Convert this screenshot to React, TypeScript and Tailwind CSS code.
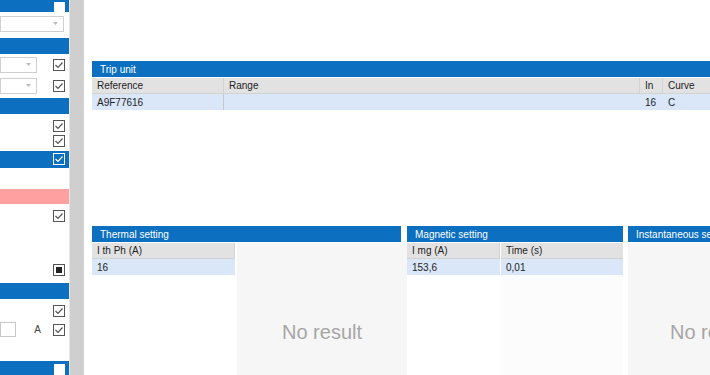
import React from 'react';

const Check = ({ checked = true, filled = false, dark = false }: { checked?: boolean; filled?: boolean; dark?: boolean }) => (
  <div className={`w-[12px] h-[12px] border flex items-center justify-center ${dark ? 'border-white bg-[#0c6fc0]' : 'border-[#555] bg-white'}`}>
    {filled && <div className="w-[6px] h-[6px] bg-[#222]" />}
    {checked && !filled && (
      <svg width="10" height="10" viewBox="0 0 10 10">
        <polyline points="1.5,5 4,7.5 8.5,2.5" fill="none" stroke={dark ? '#fff' : '#555'} strokeWidth="1.2" />
      </svg>
    )}
  </div>
);

const Dropdown = ({ w }: { w: string }) => (
  <div className={`${w} h-[16px] border border-[#d0d0d0] bg-white flex items-center justify-end pr-[5px]`}>
    <svg width="5" height="3" viewBox="0 0 5 3"><polygon points="0,0 5,0 2.5,3" fill="#bbb" /></svg>
  </div>
);

const Bar = ({ h = 'h-[16px]', children }: { h?: string; children?: React.ReactNode }) => (
  <div className={`${h} bg-[#0c6fc0] flex items-center justify-end pr-[4px]`}>{children}</div>
);

const Row = ({ children, h = 'h-[12px]' }: { children?: React.ReactNode; h?: string }) => (
  <div className={`${h} flex items-center justify-between pr-[4px]`}>{children}</div>
);

const Sidebar = () => (
  <div className="w-[70px] shrink-0 bg-white border-r border-[#e6e6e6] flex flex-col">
    <div className="h-[12px] bg-[#0c6fc0] flex items-end justify-end pr-[4px]">
      <div className="w-[11px] h-[10px] bg-white" />
    </div>
    <div className="h-[16px] mt-[4px] pr-[5px]"><Dropdown w="w-full" /></div>
    <div className="mt-[6px]"><Bar /></div>
    <div className="mt-[3px] h-[16px] flex items-center justify-between pr-[4px]"><Dropdown w="w-[37px]" /><Check /></div>
    <div className="mt-[5px] h-[16px] flex items-center justify-between pr-[4px]"><Dropdown w="w-[37px]" /><Check /></div>
    <div className="mt-[4px]"><Bar /></div>
    <div className="mt-[6px]"><Row><span /><Check /></Row></div>
    <div className="mt-[3px]"><Row><span /><Check /></Row></div>
    <div className="mt-[4px]"><Bar h="h-[17px]"><Check dark /></Bar></div>
    <div className="mt-[21px] h-[16px] bg-[#ffa0a0]" />
    <div className="mt-[6px]"><Row><span /><Check /></Row></div>
    <div className="mt-[42px]"><Row><span /><Check checked={false} filled /></Row></div>
    <div className="mt-[7px]"><Bar /></div>
    <div className="mt-[6px]"><Row><span /><Check /></Row></div>
    <div className="mt-[5px] h-[15px] flex items-center justify-between pr-[4px]">
      <div className="w-[16px] h-[15px] border border-[#c8c8c8] bg-white" />
      <span className="text-[10px] text-[#444] ml-auto mr-[12px]">A</span>
      <Check />
    </div>
    <div className="mt-[24px] h-[14px] bg-[#0c6fc0] flex items-start justify-end pr-[4px] pt-[3px]">
      <div className="w-[11px] h-[11px] bg-white" />
    </div>
  </div>
);

const Header = ({ title, w }: { title: string; w: string }) => (
  <div className={`${w} h-[16px] bg-[#0c6fc0] text-white pl-[8px] flex items-center whitespace-nowrap overflow-hidden`}>{title}</div>
);

const Cell = ({ w, children, head = false, last = false }: { w: string; children?: React.ReactNode; head?: boolean; last?: boolean }) => (
  <div className={`${w} shrink-0 h-[16px] pl-[5px] flex items-center whitespace-nowrap ${head ? 'bg-[#e2e2e2] border-b border-[#d2d2d2]' : 'bg-[#dae7f9]'} ${last ? '' : 'border-r border-[#c9c9c9]'}`}>
    {children}
  </div>
);

const NoResult = ({ className }: { className: string }) => (
  <div className={`${className} bg-[#f6f6f6] text-[#a6a6a6] text-[20px] leading-[24px] pt-[77px] whitespace-nowrap`}>No result</div>
);

export default function App() {
  return (
    <div className="w-[710px] h-[375px] overflow-hidden flex bg-white text-[10px] text-[#222]" style={{ fontFamily: '"Liberation Sans", Arial, sans-serif' }}>
      <Sidebar />
      <div className="w-[14px] shrink-0 bg-[#cfcfcf]" />
      <div className="flex-1 pl-[8px] overflow-hidden">
        <div className="mt-[61px] w-[640px]">
          <Header title="Trip unit" w="w-full" />
          <div className="flex mt-[1px]">
            <Cell w="w-[132px]" head>Reference</Cell>
            <Cell w="w-[416px]" head>Range</Cell>
            <Cell w="w-[23px]" head>In</Cell>
            <Cell w="w-[69px]" head last>Curve</Cell>
          </div>
          <div className="flex">
            <Cell w="w-[132px]">A9F77616</Cell>
            <Cell w="w-[416px]" last />
            <Cell w="w-[23px]" last>16</Cell>
            <Cell w="w-[69px]" last>C</Cell>
          </div>
        </div>

        <div className="mt-[116px] flex items-start">
          <div className="w-[315px] shrink-0">
            <Header title="Thermal setting" w="w-[309px]" />
            <div className="flex mt-[1px]">
              <div className="w-[143px]">
                <Cell w="w-full" head>I th Ph (A)</Cell>
                <Cell w="w-full" last>16</Cell>
              </div>
              <NoResult className="ml-[2px] flex-1 h-[140px] text-center" />
            </div>
          </div>
          <div className="w-[216px] shrink-0">
            <Header title="Magnetic setting" w="w-full" />
            <div className="flex mt-[1px]">
              <div className="w-[93px] bg-white">
                <Cell w="w-full" head>I mg (A)</Cell>
                <Cell w="w-full" last>153,6</Cell>
                <div className="h-[120px]" />
              </div>
              <div className="flex-1 ml-[1px] bg-[#fcfcfc]">
                <Cell w="w-full" head last>Time (s)</Cell>
                <Cell w="w-full" last>0,01</Cell>
              </div>
            </div>
          </div>
          <div className="ml-[5px] w-[200px] shrink-0">
            <Header title="Instantaneous setting" w="w-full" />
            <NoResult className="mt-[1px] h-[140px] pl-[42px]" />
          </div>
        </div>
      </div>
    </div>
  );
}
